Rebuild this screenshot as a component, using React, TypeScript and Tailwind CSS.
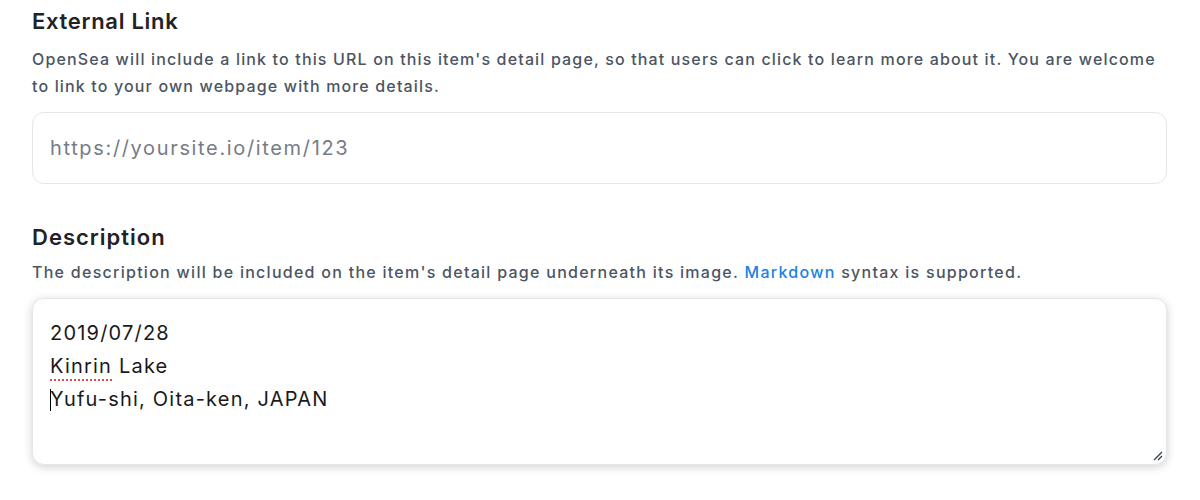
import React from 'react';

const font = { fontFamily: 'Inter, "Open Sans", sans-serif' };

function ResizeGrip() {
  return (
    <svg width="12" height="12" viewBox="0 0 12 12" className="absolute right-[3px] bottom-[3px] text-gray-700">
      <line x1="11" y1="3" x2="3" y2="11" stroke="currentColor" strokeWidth="1.2" />
      <line x1="11" y1="7" x2="7" y2="11" stroke="currentColor" strokeWidth="1.2" />
    </svg>
  );
}

export default function App() {
  return (
    <div className="w-[1200px] h-[500px] bg-white pl-8 pr-[33px] pt-[6px] text-gray-900" style={font}>
      <section>
        <h2 className="text-[22px] leading-[30px] font-semibold text-[#1f2328] tracking-[0.7px]">External Link</h2>
        <p className="mt-[10px] text-[16px] leading-[27px] font-medium text-[#4b5563] tracking-[1.15px] whitespace-nowrap">
          OpenSea will include a link to this URL on this item's detail page, so that users can click to learn more about it. You are welcome
          <br />
          to link to your own webpage with more details.
        </p>
        <div className="mt-[12px] h-[72px] rounded-xl border border-gray-200 flex items-center px-[17px]">
          <span className="text-[20px] text-[#767c86] font-normal tracking-[1.65px]">https://yoursite.io/item/123</span>
        </div>
      </section>

      <section className="mt-[38px]">
        <h2 className="text-[22px] leading-[30px] font-semibold text-[#1f2328] tracking-[1px]">Description</h2>
        <p className="mt-[7px] text-[16px] leading-[27px] font-medium text-[#4b5563] tracking-[1.27px]">
          The description will be included on the item's detail page underneath its image.{' '}
          <span className="text-[#2081e2]">Markdown</span> syntax is supported.
        </p>
        <div className="relative mt-[12px] h-[167px] rounded-xl border border-gray-200 bg-white shadow-[0_2px_10px_rgba(0,0,0,0.18)] px-[17px] pt-[18px] text-[20px] leading-[33px] text-[#1a1a1a] tracking-[1.2px]">
          <div>2019/07/28</div>
          <div>
            <span className="underline decoration-dotted decoration-[#e54848] decoration-2 underline-offset-[6px]">Kinrin</span> Lake
          </div>
          <div className="relative">
            <span className="absolute left-0 top-[6px] h-[22px] w-px bg-black" />
            Yufu-shi, Oita-ken, JAPAN
          </div>
          <ResizeGrip />
        </div>
      </section>
    </div>
  );
}
